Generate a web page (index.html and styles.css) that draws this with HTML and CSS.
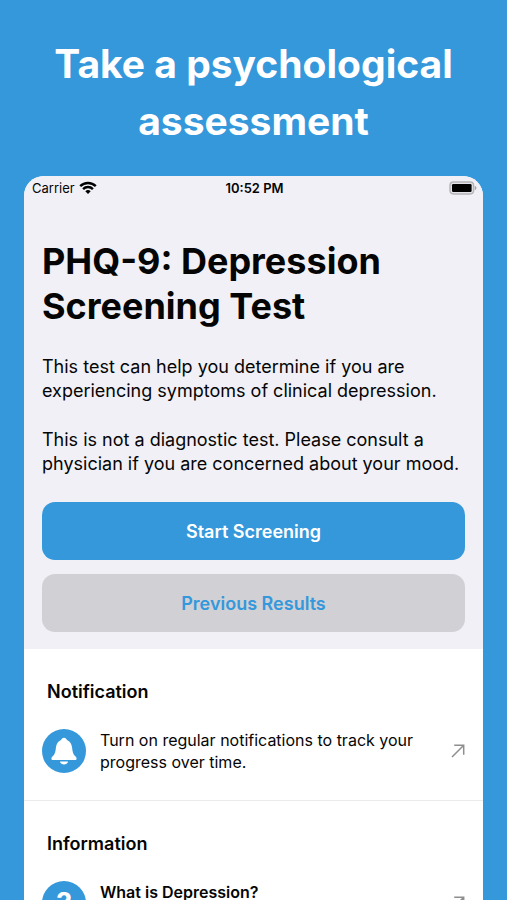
FILE: index.html
```html
<!DOCTYPE html>
<html lang="en">
<head>
<meta charset="utf-8">
<meta name="viewport" content="width=device-width, initial-scale=1">
<title>PHQ-9: Depression Screening Test</title>
<link rel="stylesheet" href="styles.css">
</head>
<body>
<h1 class="headline">Take a psychological assessment</h1>
<main class="phone">
  <div class="status">
    <div class="carrier">
      <span>Carrier</span>
      <svg width="18" height="14" viewBox="0 0 18 14" fill="none" stroke="#000" stroke-width="2.4" aria-hidden="true">
        <path d="M1.2 5.2a11 11 0 0 1 15.6 0"/>
        <path d="M4.1 8.1a6.9 6.9 0 0 1 9.8 0"/>
        <path d="M9 13 6.3 10.3a3.8 3.8 0 0 1 5.4 0z" fill="#000" stroke="none"/>
      </svg>
    </div>
    <time class="clock">10:52 PM</time>
    <svg class="battery" width="28" height="14" viewBox="0 0 28 14" aria-hidden="true">
      <rect x="1" y="1" width="23.6" height="12" rx="3.4" fill="#e4e3e8" stroke="#b4b4b8" stroke-width="1.4"/>
      <rect x="3" y="3" width="19.6" height="8" rx="1.2" fill="#000"/>
      <path d="M25.8 4.8q1.7.7 1.7 2.2t-1.7 2.2z" fill="#a4a4a8"/>
    </svg>
  </div>
  <section class="intro">
    <h2 class="title">PHQ-9: Depression Screening Test</h2>
    <p>This test can help you determine if you are experiencing symptoms of clinical depression.</p>
    <p>This is not a diagnostic test. Please consult a physician if you are concerned about your mood.</p>
    <div class="actions">
      <button type="button" class="btn primary">Start Screening</button>
      <button type="button" class="btn secondary">Previous Results</button>
    </div>
  </section>
  <section class="group">
    <h3>Notification</h3>
    <a class="row" href="#notifications">
      <svg class="badge" viewBox="0 0 44 44" aria-hidden="true">
        <circle cx="22" cy="22" r="22" fill="#3498db"/>
        <path d="M22 8.800c1.600 0 2.400 1 3 2.300 3 1.400 4.800 4.200 5.100 7.600.4 4.300 1 6.300 3.200 8.600.7.800 1.300 1.400 1.300 2.300 0 1-.7 1.500-1.700 1.500H11.100c-1 0-1.700-.5-1.700-1.500 0-.9.600-1.500 1.300-2.300 2.200-2.300 2.800-4.300 3.200-8.600.3-3.400 2.100-6.200 5.100-7.600.6-1.300 1.400-2.300 3-2.300z" fill="#fff"/>
        <path d="M18 32.400h8c-.2 1.900-1.800 3.100-4 3.100s-3.800-1.200-4-3.100z" fill="#fff"/>
      </svg>
      <span class="text">Turn on regular notifications to track your progress over time.</span>
      <svg class="arrow" viewBox="0 0 14 14" aria-hidden="true"><path d="M1 13 12.500 1.500M3.200 1.300h9.500v9.500"/></svg>
    </a>
  </section>
  <section class="group">
    <h3>Information</h3>
    <a class="row" href="#depression">
      <span class="badge mark">?</span>
      <strong class="text">What is Depression?</strong>
      <svg class="arrow" viewBox="0 0 14 14" aria-hidden="true"><path d="M1 13 12.500 1.500M3.200 1.300h9.500v9.500"/></svg>
    </a>
  </section>
</main>
</body>
</html>
```
FILE: styles.css
```css
* { box-sizing: border-box; }

body {
  margin: 0;
  height: 100vh;
  overflow: hidden;
  background: #3498db;
  color: #050505;
  font-family: Inter, "Liberation Sans", sans-serif;
}

h1, h2, h3, p { margin: 0; }

.headline {
  padding: 35px 40px 27px;
  color: #fff;
  font-size: 39px;
  line-height: 57px;
  font-weight: 700;
  text-align: center;
}

.phone {
  margin: 0 24px;
  background: #fff;
  border-radius: 20px 20px 0 0;
  overflow: hidden;
}

.status {
  display: grid;
  grid-template-columns: 1fr auto 1fr;
  align-items: center;
  height: 24px;
  padding: 0 6px 0 8px;
  background: #f1f0f6;
  font-size: 13px;
}

.carrier {
  display: flex;
  align-items: center;
  gap: 4px;
}

.clock { font-weight: 600; }

.battery { justify-self: end; }

.intro {
  padding: 39px 18px 17px;
  background: #f1f0f6;
}

.title {
  margin-bottom: 26px;
  font-size: 36px;
  line-height: 45px;
  font-weight: 700;
}

.intro p {
  margin-bottom: 25px;
  font-size: 18px;
  line-height: 24px;
}

.actions {
  display: grid;
  gap: 14px;
  padding-top: 1px;
}

.btn {
  height: 58px;
  border: 0;
  border-radius: 13px;
  font: 600 18px Inter, "Liberation Sans", sans-serif;
}

.primary {
  background: #3498db;
  color: #fff;
}

.secondary {
  background: #d1d0d5;
  color: #3498db;
}

.group {
  padding: 30px 18px 27px;
  border-bottom: 1px solid #ebebed;
}

.group h3 {
  margin-bottom: 25px;
  padding-left: 5px;
  font-size: 18px;
  line-height: 25px;
  font-weight: 600;
}

.row {
  display: flex;
  align-items: center;
  gap: 14px;
  color: inherit;
  text-decoration: none;
}

.badge {
  flex: none;
  width: 44px;
  height: 44px;
}

.mark {
  border-radius: 50%;
  background: #3498db;
  color: #fff;
  font-size: 28px;
  line-height: 44px;
  font-weight: 700;
  text-align: center;
}

.text {
  flex: 1;
  font-size: 16px;
  line-height: 22px;
}

strong.text {
  align-self: flex-start;
  font-weight: 600;
}

.arrow {
  flex: none;
  width: 14px;
  height: 14px;
  fill: none;
  stroke: #8e8e90;
  stroke-width: 1.5;
}
```
